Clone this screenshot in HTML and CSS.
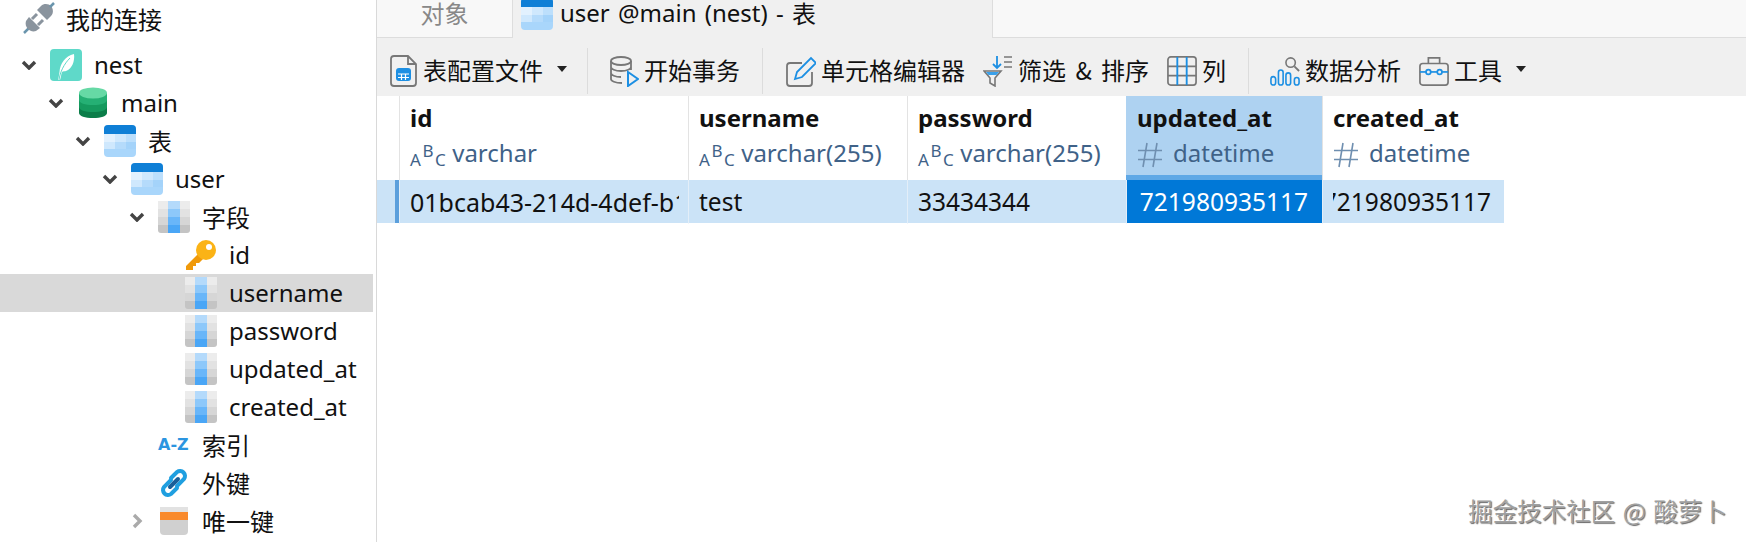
FILE: index.html
```html
<!DOCTYPE html>
<html>
<head>
	<meta charset="utf-8">
	<title>user @main (nest) - 表</title>
	<link rel="stylesheet" href="styles.css">
</head>
<body>
	<svg class="defs" width="0" height="0">
		<symbol id="i-table" viewBox="0 0 32 32">
			<rect width="32" height="32" rx="4" fill="#a9d6fb"/>
			<path d="M0 4a4 4 0 0 1 4-4h24a4 4 0 0 1 4 4v5H0z" fill="#0f7fd6"/>
			<rect y="9" width="11" height="8" fill="#e2f1fe"/>
			<rect x="11" y="9" width="11" height="8" fill="#cfe8fd"/>
			<rect x="22" y="9" width="10" height="8" fill="#bcdffc"/>
			<rect y="17" width="11" height="7" fill="#cfe8fd"/>
			<rect x="11" y="17" width="11" height="7" fill="#b5dbfb"/>
			<rect x="22" y="17" width="10" height="7" fill="#a4d3fa"/>
		</symbol>
		<symbol id="i-field" viewBox="0 0 32 32">
			<rect width="32" height="32" rx="3" fill="#c4c4c4"/>
			<rect y="0" width="32" height="8" fill="#ececec"/>
			<rect y="8" width="32" height="8" fill="#e2e2e2"/>
			<rect y="16" width="32" height="8" fill="#d6d6d6"/>
			<rect x="10" width="12" height="8" fill="#b4dafb"/>
			<rect x="10" y="8" width="12" height="8" fill="#8dc8fa"/>
			<rect x="10" y="16" width="12" height="8" fill="#69b6f9"/>
			<rect x="10" y="24" width="12" height="8" fill="#4aa6f6"/>
		</symbol>
		<symbol id="i-caret" viewBox="0 0 10 6">
			<path d="M0 0h10L5 6z" fill="#222"/>
		</symbol>
		<symbol id="i-hash" viewBox="0 0 26 26">
			<path d="M10 1L6 25M20 1l-4 24M1 8.500h24M1 17.500h24" fill="none" stroke="#6f8fb0" stroke-width="1.600"/>
		</symbol>
	</svg>

	<div class="app">
		<div class="sidebar">
			<div class="conn-row">
				<svg class="conn-icon" viewBox="0 0 32 32">
					<path d="M1 31l7-7" stroke="#6a95ad" stroke-width="2.500"/>
					<path d="M6 15l11 11-4 3c-3 1-6 0-8-2s-3-5-2-8z" fill="#8a949e"/>
					<path d="M9 17l5-5M15 23l5-5" stroke="#8a949e" stroke-width="3"/>
					<path d="M14 8l10 10 4-4c3-3 2-8 0-10s-7-3-10 0z" fill="#8a949e"/>
					<path d="M27 5l4-4" stroke="#6a95ad" stroke-width="2.500"/>
				</svg>
				<span class="cn">我的连接</span>
			</div>
			<div class="tree">
				<div class="row lv0">
					<svg class="chev" viewBox="0 0 16 10"><path d="M2 2l6 6 6-6" /></svg>
					<svg class="icon" viewBox="0 0 32 32">
						<rect width="32" height="32" rx="4" fill="#5fd9c9"/>
						<path d="M8 31c1-4 1-5 1.500-8C10 15 15 7 24 5c1 7-2 15-8 17-1 .5-3 0-4 1-1 3-1 5-2 8z" fill="#fff"/>
						<path d="M9 31c1-8 5-16 11-22" fill="none" stroke="#5fd9c9" stroke-width="1"/>
					</svg>
					<span class="en">nest</span>
				</div>
				<div class="row lv1">
					<svg class="chev" viewBox="0 0 16 10"><path d="M2 2l6 6 6-6" /></svg>
					<svg class="icon" viewBox="0 0 32 32">
						<path d="M2 6h28v20c0 3-6 5-14 5S2 29 2 26z" fill="#0b7d49"/>
						<path d="M2 6h28v14c0 3-6 5-14 5S2 23 2 20z" fill="#159a5e"/>
						<path d="M2 6h28v7c0 3-6 5-14 5S2 16 2 13z" fill="#25b074"/>
						<ellipse cx="16" cy="6" rx="14" ry="5.500" fill="#66d9a5"/>
					</svg>
					<span class="en">main</span>
				</div>
				<div class="row lv2">
					<svg class="chev" viewBox="0 0 16 10"><path d="M2 2l6 6 6-6" /></svg>
					<svg class="icon"><use href="#i-table"/></svg>
					<span class="cn">表</span>
				</div>
				<div class="row lv3">
					<svg class="chev" viewBox="0 0 16 10"><path d="M2 2l6 6 6-6" /></svg>
					<svg class="icon"><use href="#i-table"/></svg>
					<span class="en">user</span>
				</div>
				<div class="row lv4">
					<svg class="chev" viewBox="0 0 16 10"><path d="M2 2l6 6 6-6" /></svg>
					<svg class="icon"><use href="#i-field"/></svg>
					<span class="cn">字段</span>
				</div>
				<div class="row lv5">
					<span class="chev"></span>
					<svg class="icon" viewBox="0 0 32 32">
						<path d="M1 27L15 13l5 5-6 6h-3v3H8v4H1z" fill="#f09a0a"/>
						<circle cx="21" cy="11" r="10" fill="#fbb316"/>
						<circle cx="24" cy="8" r="3" fill="#fff"/>
					</svg>
					<span class="en">id</span>
				</div>
				<div class="row lv5 selected">
					<span class="chev"></span>
					<svg class="icon"><use href="#i-field"/></svg>
					<span class="en">username</span>
				</div>
				<div class="row lv5">
					<span class="chev"></span>
					<svg class="icon"><use href="#i-field"/></svg>
					<span class="en">password</span>
				</div>
				<div class="row lv5">
					<span class="chev"></span>
					<svg class="icon"><use href="#i-field"/></svg>
					<span class="en">updated_at</span>
				</div>
				<div class="row lv5">
					<span class="chev"></span>
					<svg class="icon"><use href="#i-field"/></svg>
					<span class="en">created_at</span>
				</div>
				<div class="row lv4">
					<span class="chev"></span>
					<span class="az icon">A-Z</span>
					<span class="cn">索引</span>
				</div>
				<div class="row lv4">
					<span class="chev"></span>
					<svg class="icon" viewBox="0 0 32 32" fill="none" stroke-linecap="round">
						<path d="M13 13l-7 7a5 5 0 0 0 7 7l6-6" stroke="#1f9fe0" stroke-width="4"/>
						<path d="M19 19l7-7a5 5 0 0 0-7-7l-6 6" stroke="#1f9fe0" stroke-width="4"/>
						<path d="M12 20l8-8" stroke="#1a5f99" stroke-width="4"/>
					</svg>
					<span class="cn">外键</span>
				</div>
				<div class="row lv4">
					<svg class="chev closed" viewBox="0 0 10 16"><path d="M2 2l6 6-6 6" /></svg>
					<svg class="icon" viewBox="0 0 32 32">
						<rect x="2" y="2" width="28" height="28" rx="4" fill="#d0d0d0"/>
						<rect x="2" y="2" width="28" height="5" fill="#e2e2e2"/>
						<rect x="2" y="7" width="28" height="8" fill="#f98a2c"/>
					</svg>
					<span class="cn">唯一键</span>
				</div>
			</div>
		</div>

		<div class="main">
			<div class="tabs">
				<div class="tab">对象</div>
				<div class="tab active">
					<svg class="tab-icon"><use href="#i-table"/></svg>
					<span class="en">user @main (nest) - </span><span class="cn">表</span>
				</div>
			</div>

			<div class="toolbar">
				<div class="tool">
					<svg class="icon" viewBox="0 0 30 32" fill="none">
						<path d="M3 4a3 3 0 0 1 3-3h14l8 8v19a3 3 0 0 1-3 3H6a3 3 0 0 1-3-3z" stroke="#777" stroke-width="1.800"/>
						<path d="M20 1v8h8" stroke="#777" stroke-width="1.800"/>
						<rect x="8" y="13" width="15" height="13" rx="3" fill="#1c8fe3"/>
						<path d="M10 19h11M10 22.500h11M13.500 19v6M17.500 19v6" stroke="#fff" stroke-width="1.200"/>
					</svg>
					<span class="cn">表配置文件</span>
					<svg class="caret"><use href="#i-caret"/></svg>
				</div>
				<span class="sep"></span>
				<div class="tool">
					<svg class="icon" viewBox="0 0 30 32" fill="none">
						<ellipse cx="12" cy="6" rx="10" ry="4" stroke="#777" stroke-width="1.800"/>
						<path d="M2 6v18c0 2 4 4 11 4M22 6v9M2 12c0 2 4 4 10 4s10-2 10-4M2 18c0 2 4 4 10 4" stroke="#777" stroke-width="1.800"/>
						<path d="M19 17l10 7-10 7z" stroke="#1c8fe3" stroke-width="2"/>
					</svg>
					<span class="cn">开始事务</span>
				</div>
				<span class="sep wide"></span>
				<div class="tool">
					<svg class="icon" viewBox="0 0 30 32" fill="none">
						<path d="M16 8H4a3 3 0 0 0-3 3v17a3 3 0 0 0 3 3h19a3 3 0 0 0 3-3V17" stroke="#777" stroke-width="1.800"/>
						<path d="M9 24l2-7L25 3l5 5-14 14z" stroke="#1c8fe3" stroke-width="1.800"/>
					</svg>
					<span class="cn">单元格编辑器</span>
				</div>
				<div class="tool">
					<svg class="icon" viewBox="0 0 30 32" fill="none">
						<path d="M1 16h17l-6 7v8l-5-3v-5z" stroke="#777" stroke-width="1.600"/>
						<path d="M3 17h13l-2.500 3h-8z" fill="#3aa0ea"/>
						<path d="M14 1v12M10 9l4 4 4-4" stroke="#1c8fe3" stroke-width="1.800"/>
						<path d="M21 2h8M21 7h8M21 12h8" stroke="#777" stroke-width="1.600"/>
					</svg>
					<span class="cn spaced">筛选 &amp; 排序</span>
				</div>
				<div class="tool">
					<svg class="icon" viewBox="0 0 32 32" fill="none">
						<rect x="1" y="1" width="30" height="30" rx="3" stroke="#777" stroke-width="1.800"/>
						<path d="M1 11h30M1 21h30" stroke="#777" stroke-width="1.800"/>
						<path d="M11 1v30M21 1v30" stroke="#1c8fe3" stroke-width="2"/>
					</svg>
					<span class="cn">列</span>
				</div>
				<span class="sep wide last"></span>
				<div class="tool">
					<svg class="icon" viewBox="0 0 32 32" fill="none" stroke="#1c8fe3" stroke-width="1.700">
						<rect x="1" y="22" width="5" height="9" rx="2.500"/>
						<rect x="9" y="15" width="5" height="16" rx="2.500"/>
						<rect x="17" y="18" width="5" height="13" rx="2.500"/>
						<rect x="26" y="23" width="5" height="8" rx="2.500"/>
						<circle cx="22" cy="7" r="5" stroke="#777"/>
						<path d="M26 11l5 5" stroke="#777" stroke-width="2"/>
					</svg>
					<span class="cn">数据分析</span>
				</div>
				<div class="tool">
					<svg class="icon" viewBox="0 0 32 32" fill="none">
						<rect x="1" y="8" width="30" height="23" rx="3" stroke="#777" stroke-width="1.800"/>
						<path d="M10 8V2h12v6" stroke="#777" stroke-width="1.800"/>
						<path d="M1 17h30" stroke="#1c8fe3" stroke-width="1.800"/>
						<circle cx="10" cy="17" r="2.500" fill="#f0f0f0" stroke="#1c8fe3" stroke-width="1.800"/>
						<circle cx="22" cy="17" r="2.500" fill="#f0f0f0" stroke="#1c8fe3" stroke-width="1.800"/>
					</svg>
					<span class="cn">工具</span>
					<svg class="caret"><use href="#i-caret"/></svg>
				</div>
			</div>

			<div class="grid">
				<div class="gutter head"></div>
				<div class="col-head">
					<b>id</b>
					<div class="type"><span class="abc">A<sup>B</sup>C</span>varchar</div>
				</div>
				<div class="col-head">
					<b>username</b>
					<div class="type"><span class="abc">A<sup>B</sup>C</span>varchar(255)</div>
				</div>
				<div class="col-head">
					<b>password</b>
					<div class="type"><span class="abc">A<sup>B</sup>C</span>varchar(255)</div>
				</div>
				<div class="col-head on">
					<b>updated_at</b>
					<div class="type"><svg class="hash"><use href="#i-hash"/></svg>datetime</div>
				</div>
				<div class="col-head">
					<b>created_at</b>
					<div class="type"><svg class="hash"><use href="#i-hash"/></svg>datetime</div>
				</div>

				<div class="gutter cur"></div>
				<div class="cell uuid"><div class="clip">01bcab43-214d-4def-b1</div></div>
				<div class="cell"><div class="clip">test</div></div>
				<div class="cell"><div class="clip">33434344</div></div>
				<div class="cell num on"><div class="clip"><span>1721980935117</span></div></div>
				<div class="cell num"><div class="clip"><span>1721980935117</span></div></div>
			</div>
		</div>
	</div>

	<div class="mark">掘金技术社区 @ 酸萝卜</div>
</body>
</html>
```

FILE: styles.css
```css
* {
	margin: 0;
	padding: 0;
	box-sizing: border-box;
}
html, body {
	height: 542px;
	overflow: hidden;
	background: #fff;
}
body {
	font-family: "Noto Sans", "Noto Sans CJK SC", sans-serif;
	font-size: 24px;
	color: #111;
}
.defs {
	display: block;
	height: 0;
}
.cn {
	font-family: "Noto Sans CJK SC", sans-serif;
	font-size: 24px;
}
.en {
	font-size: 24px;
}

.app {
	display: flex;
	height: 542px;
}

/* left tree */
.sidebar {
	flex: none;
	width: 377px;
	border-right: 1px solid #d9d9d9;
	padding-right: 3px;
	overflow: hidden;
}
.conn-row {
	display: flex;
	align-items: center;
	height: 36px;
	padding-left: 23px;
	margin-bottom: 10px;
}
.conn-icon {
	width: 32px;
	height: 32px;
	margin-right: 11px;
}
.row {
	display: flex;
	align-items: center;
	height: 38px;
	white-space: nowrap;
}
.row .cn, .row .en {
	padding-bottom: 2px;
}
.row.selected {
	background: #d9d9d9;
}
.lv0 { padding-left: 21px; }
.lv1 { padding-left: 48px; }
.lv2 { padding-left: 75px; }
.lv3 { padding-left: 102px; }
.lv4 { padding-left: 129px; }
.lv5 { padding-left: 156px; }
.chev {
	flex: none;
	width: 16px;
	height: 10px;
	margin-right: 13px;
	fill: none;
	stroke: #444;
	stroke-width: 3.4;
}
.chev.closed {
	height: 16px;
	stroke: #aaa;
}
.icon {
	flex: none;
	width: 32px;
	height: 32px;
}
.row .icon {
	margin-right: 12px;
}
.az {
	font-family: "DejaVu Sans", sans-serif;
	font-weight: bold;
	font-size: 16px;
	line-height: 32px;
	color: #2b95e0;
	white-space: nowrap;
}

/* right side */
.main {
	flex: 1;
	min-width: 0;
}
.tabs {
	display: flex;
	height: 38px;
	background: #f8f8f8;
	border-bottom: 1px solid #ddd;
}
.tab {
	width: 136px;
	text-align: center;
	font-family: "Noto Sans CJK SC", sans-serif;
	font-size: 24px;
	line-height: 26px;
	color: #888;
	border-right: 1px solid #ddd;
}
.tab.active {
	display: flex;
	align-items: flex-start;
	width: 480px;
	height: 38px;
	padding-left: 8px;
	color: #111;
	background: #f0f0f0;
	overflow: hidden;
}
.tab-icon {
	flex: none;
	width: 32px;
	height: 32px;
	margin: -2px 7px 0 0;
}
.tab.active .en {
	font-family: "Noto Sans", sans-serif;
	white-space: pre;
	word-spacing: 2px;
	line-height: 26px;
}

.toolbar {
	display: flex;
	align-items: center;
	gap: 18px;
	height: 58px;
	padding: 4px 0 0 11px;
	background: #f0f0f0;
}
.tool {
	display: flex;
	align-items: center;
	white-space: nowrap;
}
.tool .icon {
	width: 30px;
	height: 32px;
	margin: 3px 5px 0 0;
}
.spaced {
	word-spacing: 4px;
}
.caret {
	width: 10px;
	height: 6px;
	margin-left: 14px;
}
.sep {
	width: 1px;
	height: 46px;
	margin: 4px 3px 0 2px;
	background: #dcdcdc;
}
.sep.wide {
	margin: 4px 5px 0 4px;
}
.sep.last {
	margin-right: 3px;
}

.grid {
	display: grid;
	grid-template-columns: 22px 289px 219px 219px 196px 182px;
	grid-template-rows: 84px 44px;
	width: 1127px;
}
.gutter.head {
	background: #fff;
}
.gutter.cur {
	background: linear-gradient(to right, #cbe3f7 18px, #5b9fdc 18px);
	border-bottom: 1px solid #fff;
}
.col-head {
	padding: 5px 9px 0 10px;
	border-left: 1px solid #e3e3e3;
	white-space: nowrap;
	overflow: hidden;
}
.col-head:last-of-type {
	border-right: 1px solid #e3e3e3;
}
.col-head b {
	display: block;
	font-size: 24px;
	line-height: 34px;
}
.col-head.on {
	padding-left: 11px;
	background: #aed2f1;
	border-bottom: 5px solid #5fa8e6;
	border-left: 0;
}
.type {
	display: flex;
	align-items: center;
	font-size: 24px;
	line-height: 36px;
	color: #3f6288;
}
.abc {
	font-size: 17px;
	letter-spacing: 1.500px;
	line-height: 1;
	margin-right: 5px;
	position: relative;
	top: 6px;
}
.abc sup {
	font-size: 17px;
	vertical-align: 9px;
	line-height: 0;
}
.hash {
	flex: none;
	width: 26px;
	height: 26px;
	margin: 4px 10px 0 0;
}
.cell {
	display: flex;
	align-items: center;
	padding: 0 7px 0 10px;
	background: #cbe3f7;
	border-left: 1px solid #e3eef8;
	border-bottom: 1px solid #fff;
	font-size: 24.5px;
	white-space: nowrap;
}
.clip {
	flex: 1;
	min-width: 0;
	overflow: hidden;
}
.cell.uuid {
	padding-right: 9px;
	font-size: 25px;
}
.cell.num {
	padding-right: 13px;
}
.cell.num .clip {
	display: flex;
	justify-content: flex-end;
}
.cell.num span {
	flex: none;
}
.cell.on {
	padding-left: 12px;
	padding-right: 14px;
	background: #0078d7;
	color: #fff;
}

.mark {
	position: absolute;
	right: 19px;
	bottom: 15px;
	font-family: "Noto Sans CJK SC", sans-serif;
	font-size: 24.5px;
	line-height: 32px;
	white-space: nowrap;
	word-spacing: 2px;
	color: #a0a0a0;
	text-shadow: -1px -1px 0 #fff, 1px 1px 1px #666;
}
```
